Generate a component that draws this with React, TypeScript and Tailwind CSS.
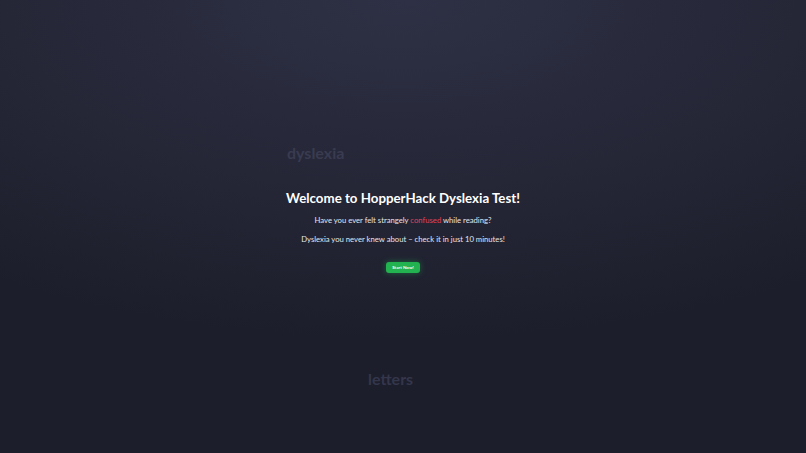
export default function App() {
  return (
    <div
      className="relative w-full h-[453px] overflow-hidden bg-[radial-gradient(ellipse_90%_75%_at_50%_0%,#2e3045_0%,#252737_55%,#1c1e2b_100%)]"
      style={{ fontFamily: "Lato, 'Noto Sans', sans-serif" }}
    >
      <div className="absolute left-[287px] top-[141px] text-[16px] font-bold text-[#393b50] select-none">
        dyslexia
      </div>
      <div className="absolute left-[368px] top-[367px] text-[16px] font-bold text-[#34364b] select-none">
        letters
      </div>
      <div className="flex h-full flex-col items-center justify-center pt-[8px]">
        <h1 className="text-[13.3px] font-bold leading-[18px] text-white">
          Welcome to HopperHack Dyslexia Test!
        </h1>
        <p className="mt-[7px] text-[7.7px] leading-[12px] text-[#e4e4ea]">
          Have you ever felt strangely <span className="text-[#e0435a]">confused</span> while reading?
        </p>
        <p className="mt-[7px] text-[7.7px] leading-[12px] text-[#e4e4ea]">
          Dyslexia you never knew about – check it in just 10 minutes!
        </p>
        <button className="mt-[17px] h-[11px] rounded-[3px] bg-[#22b24f] px-[6px] text-[4.5px] font-bold leading-[11px] text-white shadow-[0_0_6px_rgba(34,178,79,0.45)]">
          Start Now!
        </button>
      </div>
    </div>
  );
}
